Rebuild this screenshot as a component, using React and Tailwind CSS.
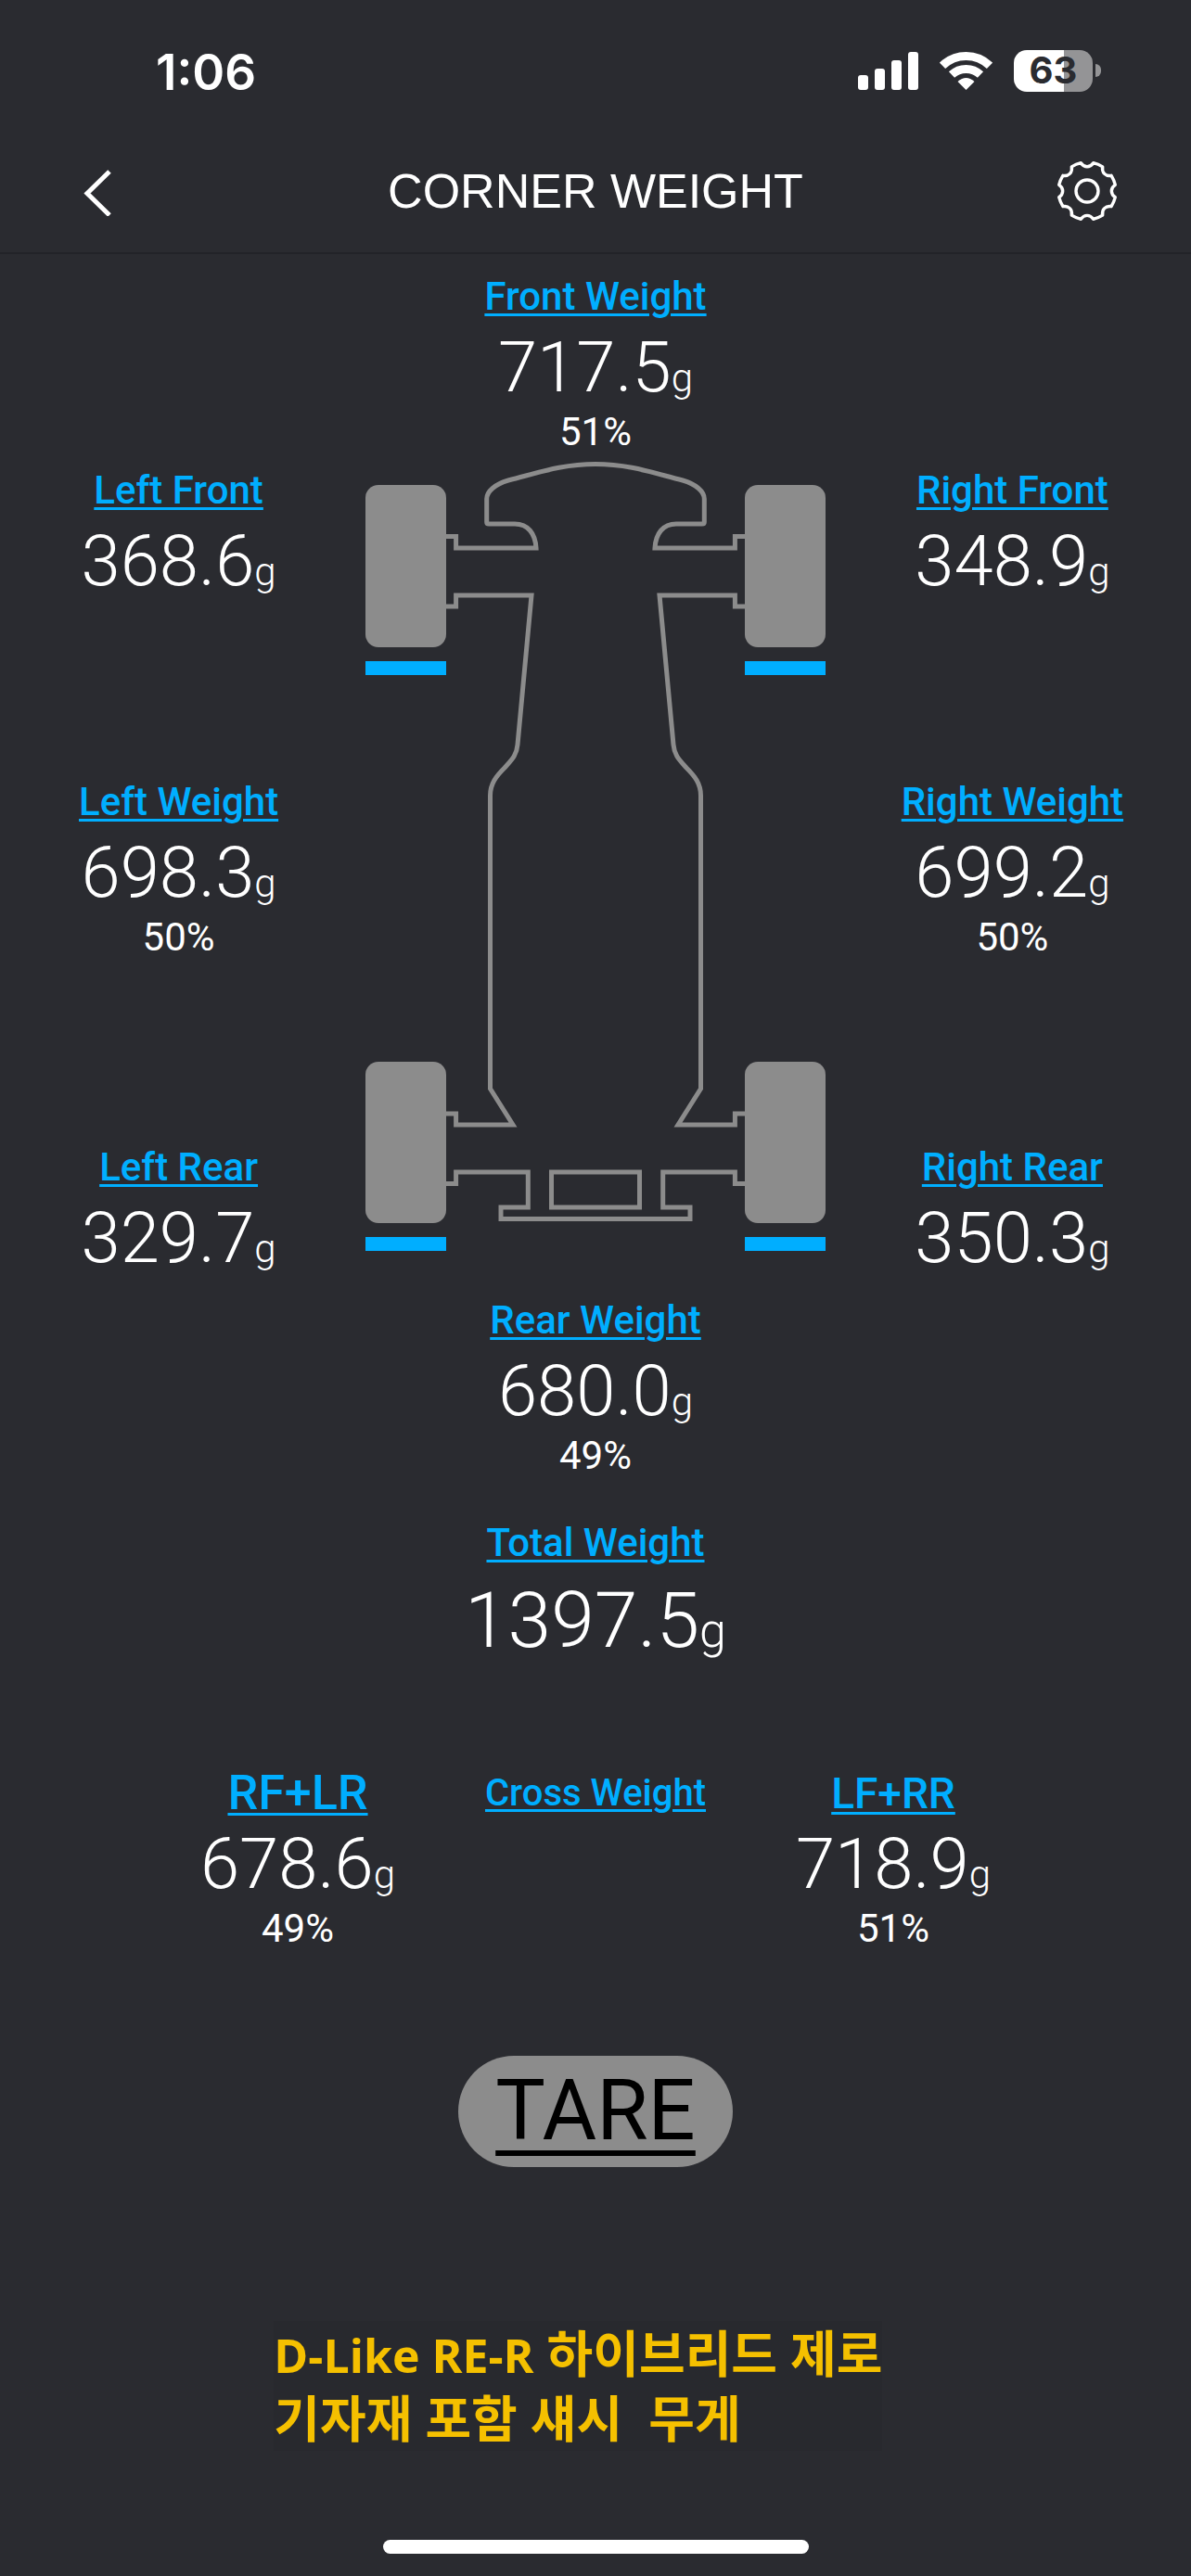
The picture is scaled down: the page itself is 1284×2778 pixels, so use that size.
const BATTERY = 63;

function StatusBar() {
  return (
    <div className="flex h-[152px] items-center justify-between pr-[97px] pl-[168px]">
      <span className="pt-1 font-['Inter',sans-serif] text-[53px] leading-[56px] font-semibold">1:06</span>
      <div className="flex items-center gap-[23px]">
        <svg width="65" height="41" viewBox="0 0 65 41" fill="currentColor" aria-hidden="true">
          <rect x="0" y="25" width="11" height="16" rx="3" />
          <rect x="18" y="18" width="11" height="23" rx="3" />
          <rect x="36" y="9" width="11" height="32" rx="3" />
          <rect x="54" y="0" width="11" height="41" rx="3" />
        </svg>
        <svg width="57" height="42" viewBox="0 0 57 42" fill="none" stroke="currentColor" strokeWidth="9" aria-hidden="true">
          <path d="M3 15.8A36.5 36.5 0 0 1 54 15.8" />
          <path d="M13 25.6A22.5 22.5 0 0 1 44 25.6" />
          <path d="M19.5 33Q28.5 25 37.5 33L28.5 42Z" fill="currentColor" stroke="none" />
        </svg>
        <div className="flex items-center gap-[3px]">
          <div
            className="flex h-[45px] w-[85px] items-center justify-center rounded-[14px]"
            style={{ background: `linear-gradient(to right, #fff ${BATTERY}%, #949496 ${BATTERY}%)` }}
          >
            <span className="font-['Inter',sans-serif] text-[40px] leading-[44px] font-bold text-[#2a2b30]">
              {BATTERY}
            </span>
          </div>
          <div className="h-[14px] w-[6px] rounded-r-full bg-[#949496]" />
        </div>
      </div>
    </div>
  );
}

function NavBar() {
  return (
    <nav className="flex h-[122px] items-center justify-between border-b-2 border-[#222328] px-[79px] pb-3">
      <button type="button" aria-label="Back" className="flex h-[66px] w-[66px] items-center">
        <svg width="54" height="54" viewBox="0 0 54 54" fill="none" stroke="currentColor" strokeWidth="5">
          <path d="M39 6L15 29.5L39 53" />
        </svg>
      </button>
      <h1 className="font-['Liberation_Sans',sans-serif] text-[52px] leading-[60px]">CORNER WEIGHT</h1>
      <button type="button" aria-label="Settings">
        <svg width="66" height="66" viewBox="-33 -33 66 66" fill="none" stroke="currentColor" strokeWidth="3.4" strokeLinejoin="round">
          <path d="M-6.7-30.3C-3.2-25 3.2-25 6.7-30.3Q12-29 16.7-26.1C15.5-20 20-15.5 26.1-16.7Q29-12 30.3-6.7C25-3.2 25 3.2 30.3 6.7Q29 12 26.1 16.7C20 15.5 15.5 20 16.7 26.1Q12 29 6.7 30.3C3.2 25-3.2 25-6.7 30.3Q-12 29-16.7 26.1C-15.5 20-20 15.5-26.1 16.7Q-29 12-30.3 6.7C-25 3.2-25-3.2-30.3-6.7Q-29-12-26.1-16.7C-20-15.5-15.5-20-16.7-26.1Q-12-29-6.7-30.3Z" />
          <circle r="12" />
        </svg>
      </button>
    </nav>
  );
}

function Label({ children, size = 'text-[42px]' }) {
  return (
    <a
      href="#"
      className={`${size} leading-[48px] font-medium whitespace-nowrap text-[#00aeff] underline decoration-3 underline-offset-4`}
    >
      {children}
    </a>
  );
}

function Reading({ label, value, percent, size, large = false }) {
  return (
    <div className="flex flex-col items-center">
      <Label size={size}>{label}</Label>
      {value && (
        <p className={`mt-3 font-light ${large ? 'text-[84px] leading-[96px]' : 'text-[76px] leading-[80px]'}`}>
          {value}
          <span className={large ? 'text-[52px] leading-none' : 'text-[42px] leading-none'}>g</span>
        </p>
      )}
      {percent && <p className="mt-1.5 text-[42px] leading-[48px]">{percent}%</p>}
    </div>
  );
}

// one side of the chassis, mirrored for the other
function ChassisHalf() {
  return (
    <>
      <path d="M642 500.5C606 500.5 580 510 548 518C534 522 524.7 530 524.7 538V563Q524.7 565 527 565H555C569 565 577 575 578 591H491.6V578.6H480" />
      <path d="M480 654H491.6V642H573L558 803C557 815 551 820 544 828C535 837 528.5 845 528.5 858V1174L553 1213H491.6V1201H480" />
      <path d="M480 1276.5H491.6V1264H569.3V1302H540V1314.5H642" />
      <g stroke="none">
        <rect x="394" y="523" width="87" height="175" rx="14" fill="#8c8c8c" />
        <rect x="394" y="713" width="87" height="15" fill="#00aeff" />
        <rect x="394" y="1145" width="87" height="174" rx="14" fill="#8c8c8c" />
        <rect x="394" y="1334" width="87" height="15" fill="#00aeff" />
      </g>
    </>
  );
}

function Chassis() {
  return (
    <svg
      className="mt-2 w-full max-w-[496px]"
      viewBox="394 498 496 852"
      fill="none"
      stroke="#8c8c8c"
      strokeWidth="5"
      role="img"
      aria-label="Chassis"
    >
      <ChassisHalf />
      <g transform="translate(1284 0) scale(-1 1)">
        <ChassisHalf />
      </g>
      <rect x="594.5" y="1264" width="95" height="38" />
    </svg>
  );
}

export default function App() {
  return (
    <div className="flex min-h-screen flex-col bg-[#2a2b30] font-['Roboto',sans-serif] text-white">
      <header>
        <StatusBar />
        <NavBar />
      </header>

      <main className="flex flex-col">
        <section className="grid grid-cols-[3fr_4fr_3fr] pt-[22px]">
          <div className="flex flex-col pt-[209px]">
            <Reading label="Left Front" value="368.6" />
            <div className="mt-[196px]">
              <Reading label="Left Weight" value="698.3" percent={50} />
            </div>
            <div className="mt-[200px]">
              <Reading label="Left Rear" value="329.7" />
            </div>
          </div>
          <div className="flex flex-col items-center">
            <Reading label="Front Weight" value="717.5" percent={51} />
            <Chassis />
            <div className="mt-[50px]">
              <Reading label="Rear Weight" value="680.0" percent={49} />
            </div>
            <div className="mt-[46px]">
              <Reading label="Total Weight" value="1397.5" large />
            </div>
          </div>
          <div className="flex flex-col pt-[209px]">
            <Reading label="Right Front" value="348.9" />
            <div className="mt-[196px]">
              <Reading label="Right Weight" value="699.2" percent={50} />
            </div>
            <div className="mt-[200px]">
              <Reading label="Right Rear" value="350.3" />
            </div>
          </div>
        </section>

        <section className="mt-[114px] grid grid-cols-3 px-[12.5%]">
          <Reading label="RF+LR" value="678.6" percent={49} size="text-[52px]" />
          <Reading label="Cross Weight" size="text-[40px]" />
          <Reading label="LF+RR" value="718.9" percent={51} size="text-[46px]" />
        </section>

        <button
          type="button"
          className="mt-[113px] h-[120px] self-center rounded-full bg-[#8c8c8c] px-[40px] text-[90px] leading-[120px] text-black underline decoration-6 underline-offset-12"
        >
          TARE
        </button>

        <p className="mt-[166px] ml-[23%] self-start bg-[#28292e] font-['Open_Sans','Noto_Sans_CJK_KR',sans-serif] text-[54px] leading-[70px] font-bold whitespace-pre text-[#f5c000]">
          <span className="text-[50px] leading-none">D-Like RE-R</span> 하이브리드 제로
          <br />
          기자재 포함 섀시{'  '}무게
        </p>
      </main>

      <div className="mt-auto mb-6 h-[15px] w-[459px] self-center rounded-full bg-white" />
    </div>
  );
}
